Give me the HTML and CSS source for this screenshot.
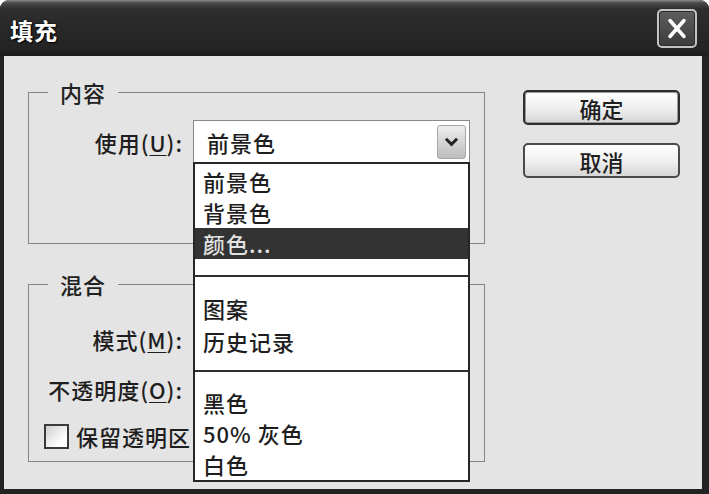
FILE: index.html
```html
<!DOCTYPE html>
<html lang="zh-CN">
<head>
<meta charset="utf-8">
<title>填充</title>
<link rel="stylesheet" href="styles.css">
</head>
<body>
<div class="window">
  <div class="titlebar">
    <span class="title">填充</span>
    <button class="close" aria-label="关闭">
      <svg viewBox="0 0 36 35" width="36" height="35"><path d="M11 9.5 L25 25.5 M25 9.5 L11 25.5" stroke="#fff" stroke-width="3.5" stroke-linecap="round"/></svg>
    </button>
  </div>
  <div class="client">
    <div class="left">
      <fieldset class="group group-content">
        <legend>内容</legend>
        <div class="row">
          <span class="lbl">使用(<u>U</u>):</span>
          <div class="select">
            <span class="select-value">前景色</span>
            <span class="select-arrow">
              <svg viewBox="0 0 29 34" width="29" height="34"><path d="M8.5 13.5 L14.5 19.5 L20.5 13.5" fill="none" stroke="#222" stroke-width="3.2"/></svg>
            </span>
            <div class="menu">
              <div class="menu-group">
                <div class="menu-item">前景色</div>
                <div class="menu-item">背景色</div>
                <div class="menu-item menu-item-active">颜色...</div>
              </div>
              <div class="menu-sep"></div>
              <div class="menu-group menu-group-tall">
                <div class="menu-item">图案</div>
                <div class="menu-item">历史记录</div>
              </div>
              <div class="menu-sep menu-sep-b"></div>
              <div class="menu-group">
                <div class="menu-item">黑色</div>
                <div class="menu-item">50% 灰色</div>
                <div class="menu-item">白色</div>
              </div>
            </div>
          </div>
        </div>
      </fieldset>
      <fieldset class="group group-blend">
        <legend>混合</legend>
        <div class="row">
          <span class="lbl">模式(<u>M</u>):</span>
          <div class="select"></div>
        </div>
        <div class="row row-gap">
          <span class="lbl">不透明度(<u>O</u>):</span>
          <div class="field"></div>
        </div>
        <div class="check-row">
          <span class="checkbox"></span>
          <span class="check-label">保留透明区</span>
        </div>
      </fieldset>
    </div>
    <div class="buttons">
      <button class="btn btn-default">确定</button>
      <button class="btn">取消</button>
    </div>
  </div>
</div>
</body>
</html>
```

FILE: styles.css
```css
* { box-sizing: border-box; }

html, body {
  margin: 0;
  padding: 0;
  background: #ffffff;
}

body {
  font-family: "Noto Sans CJK SC", "Noto Sans", sans-serif;
  font-weight: 500;
  color: #1e1e1e;
  font-size: 22px;
}

.window {
  width: 709px;
  height: 494px;
  background: #232323;
  border-radius: 9px 9px 0 0;
  display: flex;
  flex-direction: column;
  overflow: hidden;
}

.titlebar {
  height: 56px;
  flex: none;
  display: flex;
  align-items: center;
  justify-content: space-between;
  padding: 0 12px 0 10px;
  background: linear-gradient(#8a8a8a 0, #4a4a4a 3px, #2e2e2e 9px, #282828 30px, #232323 50px, #1c1c1c 56px);
}

.title {
  color: #ffffff;
  font-size: 23px;
  font-weight: bold;
  line-height: 30px;
  margin-top: 3px;
  letter-spacing: 1px;
  text-shadow: 1px 1px 1px #000, 0 0 2px #000;
}

.close {
  width: 40px;
  height: 39px;
  padding: 0;
  margin: 0;
  border: 2px solid #c4c4c4;
  border-radius: 5px;
  background: linear-gradient(#5e5e5e, #3c3c3c);
  display: flex;
  align-items: center;
  justify-content: center;
  box-shadow: inset 0 0 0 1px #2a2a2a;
}

.close svg { display: block; }

.client {
  flex: 1;
  margin: 0 7px 5px 4px;
  background: #e4e4e4;
  display: flex;
  align-items: flex-start;
  padding: 23px 22px 0 24px;
}

.left {
  width: 457px;
  flex: none;
}

.group {
  margin: 0;
  border: 1px solid #858585;
  padding: 0;
  min-width: 0;
}

.group legend {
  margin-left: 19px;
  padding: 0 12px;
  font-size: 22px;
  line-height: 26px;
  letter-spacing: 1px;
  color: #222;
}

.group-content {
  padding: 15px 0 80px 0;
}

.group-blend {
  margin-top: 27px;
  padding: 20px 0 12px 0;
}

.row {
  display: flex;
  align-items: center;
  height: 43px;
}

.row-gap {
  margin-top: 7px;
}

.lbl {
  width: 154px;
  flex: none;
  text-align: right;
  margin-right: 10px;
  white-space: nowrap;
  line-height: 26px;
  letter-spacing: 1px;
}

.lbl u { text-decoration-thickness: 1px; text-underline-offset: 3px; }

.select {
  position: relative;
  width: 277px;
  height: 43px;
  border: 1px solid #8a8a8a;
  background: #ffffff;
  display: flex;
  align-items: center;
  padding-left: 13px;
}

.select-value {
  line-height: 26px;
  letter-spacing: 1px;
}

.select-arrow {
  margin-left: auto;
  margin-right: 3px;
  width: 29px;
  height: 34px;
  border-radius: 3px;
  background: linear-gradient(#eeeeee, #bcbcbc);
  border: 1px solid #a8a8a8;
  display: flex;
  align-items: center;
  justify-content: center;
}

.select-arrow svg { display: block; }

.field {
  width: 90px;
  height: 43px;
  border: 1px solid #8a8a8a;
  background: #fff;
}

.menu {
  position: absolute;
  left: -1px;
  top: 41px;
  width: 277px;
  background: #ffffff;
  border: 2px solid #262626;
  padding-top: 2px;
  z-index: 5;
}

.menu-item {
  height: 31px;
  line-height: 31px;
  padding-left: 8px;
  color: #1e1e1e;
  white-space: nowrap;
  letter-spacing: 1px;
}

.menu-group-tall .menu-item {
  height: 33px;
  line-height: 33px;
}

.menu-item-active {
  background: #333333;
  color: #e2e2e2;
}

.menu-sep {
  height: 2px;
  background: #2e2e2e;
  margin: 16px 0 15px 0;
}

.menu-sep-b {
  margin-top: 12px;
}

.check-row {
  display: flex;
  align-items: center;
  height: 26px;
  margin-top: 13px;
  padding-left: 15px;
}

.checkbox {
  width: 25px;
  height: 25px;
  flex: none;
  border: 2px solid #3a3a3a;
  background: linear-gradient(135deg, #cfcfcf, #ffffff 75%);
}

.check-label {
  margin-left: 7px;
  line-height: 26px;
  white-space: nowrap;
  letter-spacing: 1px;
}

.buttons {
  width: 157px;
  margin-left: 38px;
  margin-top: 11px;
  flex: none;
  display: flex;
  flex-direction: column;
  gap: 18px;
}

.btn {
  width: 157px;
  height: 35px;
  padding: 0;
  margin: 0;
  font-family: inherit;
  font-weight: 500;
  font-size: 22px;
  line-height: 30px;
  color: #1e1e1e;
  border: 2px solid #4a4a4a;
  border-radius: 5px;
  background: linear-gradient(#ffffff, #f0f0f0 50%, #d6d6d6);
}

.btn-default {
  border-color: #2e2e2e;
  box-shadow: inset 0 0 0 1px #9a9a9a;
}
```
